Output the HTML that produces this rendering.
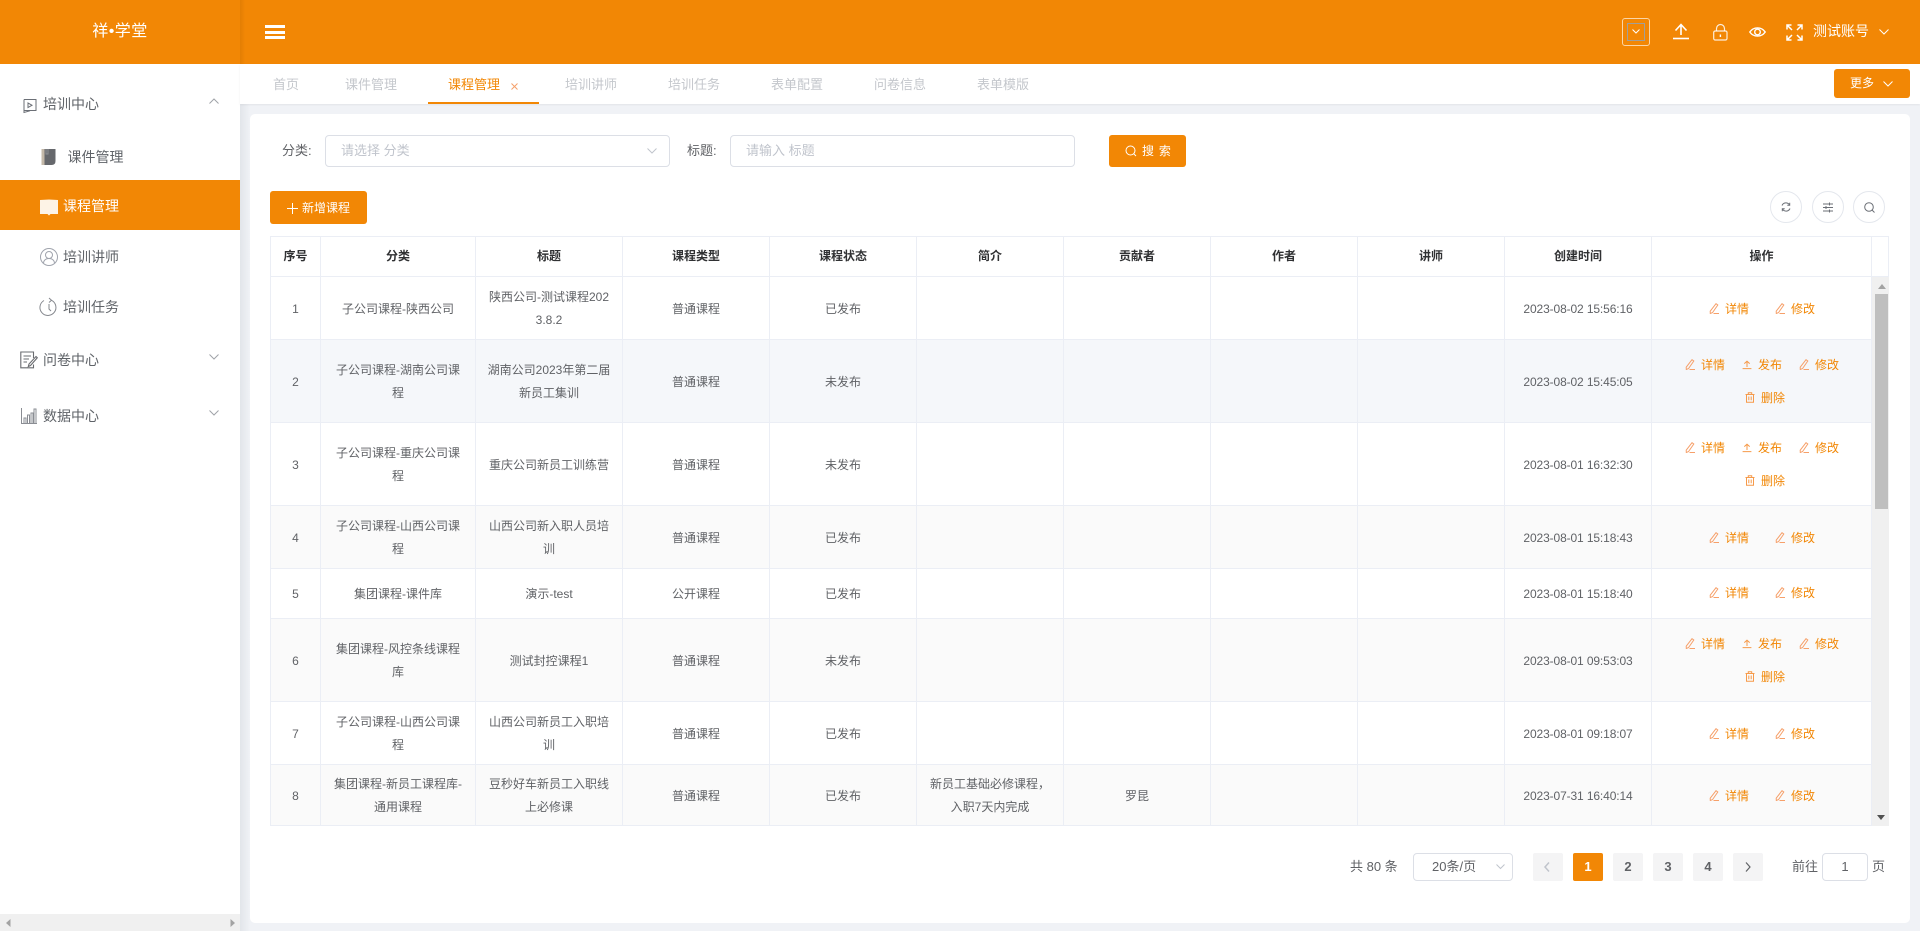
<!DOCTYPE html>
<html lang="zh-CN"><head><meta charset="utf-8"><title>课程管理</title>
<style>
*{box-sizing:border-box}
html,body{margin:0;padding:0;width:1920px;height:931px;overflow:hidden;background:#f0f2f6;font-family:"Liberation Sans","Noto Sans CJK SC",sans-serif;font-size:12px;color:#606266}
.a{position:absolute}
.t{position:absolute;white-space:nowrap;line-height:20px;height:20px}
svg{position:absolute;display:block;overflow:visible}
#hdr{left:0;top:0;width:1920px;height:64px;background:#f28705}
#side{left:0;top:64px;width:240px;height:867px;background:#fff}
#shadow{left:240px;top:64px;width:10px;height:867px;background:linear-gradient(90deg,#e2e5ea,#f0f2f6)}
#tabs{left:240px;top:64px;width:1680px;height:40px;background:#fff;box-shadow:0 1px 2px rgba(0,0,0,.06)}
#card{left:250px;top:114px;width:1660px;height:809px;background:#fff;border-radius:5px}
.tab{font-size:13px;color:#c4c7cc;top:75px}
.m{font-size:14px;color:#5f6368}
.btn{background:#f28705;border-radius:3px;color:#fff}
.box{background:#fff;border:1px solid #dcdfe6;border-radius:4px}
.r{position:absolute;left:270px;width:1619px;border-bottom:1px solid #ebeef5;border-left:1px solid #ebeef5;background:#fff}
.r.alt{background:#fafafa}.r.hov{background:#f5f7fa}
.c{position:absolute;top:0;bottom:0;display:flex;align-items:center;justify-content:center;text-align:center;line-height:23px;border-right:1px solid #ebeef5;color:#606266;padding-top:2px}
.th .c{padding-top:0}
.c0{left:0;width:50px}.c1{left:50px;width:155px}.c2{left:205px;width:147px}.c3{left:352px;width:147px}.c4{left:499px;width:147px}.c5{left:646px;width:147px}.c6{left:793px;width:147px}.c7{left:940px;width:147px}.c8{left:1087px;width:147px}.c9{left:1234px;width:147px}.c10{left:1381px;width:220px}
.r:not(.th) .c9{letter-spacing:-.12px}
.th .c{font-weight:bold;color:#303133}
.op{position:absolute;height:20px;line-height:20px;color:#f28705;white-space:nowrap;padding-left:16px}
.op svg{left:0;top:4px;width:10px;height:11px}
.pg{position:absolute;top:853px;width:30px;height:28px;background:#f4f4f5;border-radius:2px;text-align:center;line-height:28px;font-size:13px;font-weight:bold;color:#606266}
.rb{width:32px;height:32px;top:191px;border:1px solid #e4e7ed;border-radius:50%}
</style></head><body>
<svg width="0" height="0" style="position:absolute"><defs>
<symbol id="e" viewBox="0 0 10 11"><path d="M7 .7 8.800 2 3.500 9.600 1.300 10.500 1.200 8.200Z M4.500 10.500H10" fill="none" stroke="#f6a06a" stroke-width="1"/></symbol>
<symbol id="u" viewBox="0 0 10 11"><path d="M5 2.200V8M2.300 4.600 5 2.200 7.700 4.600M.6 9.600H9.400" fill="none" stroke="#f69a4a" stroke-width="1"/></symbol>
<symbol id="d" viewBox="0 0 10 11"><path d="M.5 2.500H9.500M3.300 2.500V.8H6.700V2.500M1.500 2.500V10.200H8.500V2.500M3.800 4.500V8.300M6.200 4.500V8.300" fill="none" stroke="#f69a4a" stroke-width="1"/></symbol>
</defs></svg>

<div class="a" id="hdr"></div>
<div class="a" style="left:240px;top:0;width:5px;height:64px;background:linear-gradient(90deg,#e27e04,#f28705)"></div>
<div class="t" style="left:91px;top:21px;font-size:16px;line-height:22px;height:22px;color:#fff;width:58px;text-align:center;letter-spacing:.5px">祥•学堂</div>
<div class="a" style="left:265px;top:25px;width:20px;height:3px;background:#fff"></div>
<div class="a" style="left:265px;top:31px;width:20px;height:3px;background:#fff"></div>
<div class="a" style="left:265px;top:36px;width:20px;height:3px;background:#fff"></div>

<div class="a" style="left:1622px;top:18px;width:28px;height:28px;border:1px solid rgba(255,255,255,.65);border-radius:3px"></div>
<div class="a" style="left:1627px;top:23px;width:18px;height:18px;border:1px solid rgba(140,165,190,.8)"></div>
<svg style="left:1632px;top:29px" width="8" height="5"><path d="M.5 .5 4 4 7.500 .5" fill="none" stroke="#fff"/></svg>
<svg style="left:1672px;top:23px" width="18" height="17"><path d="M9 2V12M3.500 7.500 9 1.500 14.500 7.500" fill="none" stroke="#fff" stroke-width="1.600"/><path d="M1 15.500H17" stroke="#fff" stroke-width="1.600"/></svg>
<svg style="left:1713px;top:24px" width="15" height="17"><rect x=".7" y="7" width="13.300" height="9" rx="1.500" fill="none" stroke="#fff" stroke-opacity=".85" stroke-width="1.200"/><path d="M3.500 7V4.500a4 4 0 0 1 8 0V7" fill="none" stroke="#fff" stroke-opacity=".85" stroke-width="1.200"/><path d="M7.400 10.500V13" stroke="#fff" stroke-width="1.400"/></svg>
<svg style="left:1749px;top:26px" width="17" height="12"><path d="M.8 6C4.500 .6 12.500 .6 16.200 6 12.500 11.400 4.500 11.400 .8 6Z" fill="none" stroke="#fff" stroke-width="1.400"/><circle cx="8.500" cy="6" r="2.800" fill="none" stroke="#fff" stroke-width="1.400"/></svg>
<svg style="left:1786px;top:24px" width="17" height="17" fill="none" stroke="#fff" stroke-width="1.500"><path d="M1 5.500V1H5.500M1 1 6 6M16 5.500V1H11.500M16 1 11 6M1 11.500V16H5.500M1 16 6 11M16 11.500V16H11.500M16 16 11 11"/></svg>
<div class="t" style="left:1813px;top:21px;font-size:14px;color:#fff">测试账号</div>
<svg style="left:1879px;top:29px" width="10" height="6"><path d="M.5 .5 5 5 9.500 .5" fill="none" stroke="#fff"/></svg>

<div class="a" id="side"></div>
<svg style="left:23px;top:97px" width="14" height="16" fill="none" stroke="#6b6f76" stroke-width="1"><path d="M1 2.500H13V13.500H1V15.500"/><path d="M1 2.500V15.500L7 13.800"/><path d="M5 6V10.500L9 8.200Z"/></svg>
<div class="t m" style="left:43px;top:94px">培训中心</div>
<svg style="left:209px;top:98px" width="10" height="6"><path d="M.5 5.500 5 1 9.500 5.500" fill="none" stroke="#a0a3a8"/></svg>
<svg style="left:41px;top:148px" width="16" height="18"><path d="M.5 1H14.500V13Q14.500 17 10.500 17H.5Z" fill="#66686c"/><rect x=".5" y="1" width="3" height="16" fill="#c4b9a9"/><path d="M5 1V6H7V1" fill="none" stroke="#8e9094"/></svg>
<div class="t m" style="left:67.500px;top:147px">课件管理</div>
<div class="a" style="left:0;top:180px;width:240px;height:50px;background:#f28705"></div>
<svg style="left:40px;top:199px" width="18" height="17"><path d="M0 1 9 .5 18 1V15H10.500L9 16.500 7.500 15H0Z" fill="#fdf3e6"/></svg>
<div class="t m" style="left:63px;top:196px;color:#fff">课程管理</div>
<svg style="left:40px;top:248px" width="18" height="18" fill="none" stroke="#a0a4ad" stroke-width="1"><circle cx="9" cy="9" r="8.500"/><circle cx="9" cy="7" r="3.500"/><path d="M3.500 15C4 11.500 6 10.500 9 10.500S14 11.500 14.500 15"/></svg>
<div class="t m" style="left:63px;top:247px">培训讲师</div>
<svg style="left:40px;top:297px" width="18" height="19" fill="none" stroke="#85888e" stroke-width="1"><path d="M11.500 3.300A8 8 0 1 1 4 3.500"/><path d="M9 1 11.500 3.300 9 5.500"/><path d="M9 7V12L11 14"/></svg>
<div class="t m" style="left:63px;top:297px">培训任务</div>
<svg style="left:20px;top:351px" width="18" height="18" fill="none" stroke="#6a6c70" stroke-width="1.100"><path d="M13.500 7V1H.8V16.800H13.500V13.500"/><path d="M3.500 5H11M3.500 8H9M3.500 11H7"/><path d="M16 5.500 17.300 6.800 10.500 14.500 8.300 15.500 9 13Z"/></svg>
<div class="t m" style="left:43px;top:350px">问卷中心</div>
<svg style="left:209px;top:354px" width="10" height="6"><path d="M.5 .5 5 5 9.500 .5" fill="none" stroke="#a0a3a8"/></svg>
<svg style="left:21px;top:408px" width="16" height="16" fill="none" stroke="#8a8d93" stroke-width="1"><path d="M.5 0V15.500H16"/><path d="M3 15V10H5V15M6.500 15V7H8.500V15M10 15V5H12V15M13 15V1H15V15"/></svg>
<div class="t m" style="left:43px;top:406px">数据中心</div>
<svg style="left:209px;top:410px" width="10" height="6"><path d="M.5 .5 5 5 9.500 .5" fill="none" stroke="#a0a3a8"/></svg>
<div class="a" style="left:0;top:914px;width:240px;height:17px;background:#f0f0f0"></div>
<svg style="left:6px;top:919px" width="5" height="8"><path d="M4.500 0V8L0 4Z" fill="#a3a3a3"/></svg>
<svg style="left:230px;top:919px" width="5" height="8"><path d="M.5 0V8L5 4Z" fill="#a3a3a3"/></svg>

<div class="a" id="shadow"></div>
<div class="a" id="tabs"></div>
<div class="t tab" style="left:273px">首页</div>
<div class="t tab" style="left:345px">课件管理</div>
<div class="t tab" style="left:448px;color:#f28705">课程管理</div>
<svg style="left:511px;top:83px" width="7" height="7"><path d="M.5 .5 6.500 6.500M6.500 .5 .5 6.500" stroke="#f5a06a"/></svg>
<div class="a" style="left:428px;top:102px;width:111px;height:2px;background:#f28705"></div>
<div class="t tab" style="left:565px">培训讲师</div>
<div class="t tab" style="left:668px">培训任务</div>
<div class="t tab" style="left:771px">表单配置</div>
<div class="t tab" style="left:874px">问卷信息</div>
<div class="t tab" style="left:977px">表单模版</div>
<div class="a btn" style="left:1834px;top:69px;width:76px;height:29px"></div>
<div class="t" style="left:1850px;top:73px;color:#fff">更多</div>
<svg style="left:1883px;top:81px" width="10" height="6"><path d="M.5 .5 5 5 9.500 .5" fill="none" stroke="#fff"/></svg>

<div class="a" id="card"></div>
<div class="t" style="left:282px;top:141px;font-size:13px">分类:</div>
<div class="a box" style="left:325px;top:135px;width:345px;height:32px"></div>
<div class="t" style="left:341px;top:141px;font-size:13px;color:#c0c4cc">请选择 分类</div>
<svg style="left:647px;top:148px" width="10" height="6"><path d="M.5 .5 5 5 9.500 .5" fill="none" stroke="#c0c4cc"/></svg>
<div class="t" style="left:687px;top:141px;font-size:13px">标题:</div>
<div class="a box" style="left:730px;top:135px;width:345px;height:32px"></div>
<div class="t" style="left:746px;top:141px;font-size:13px;color:#c0c4cc">请输入 标题</div>
<div class="a btn" style="left:1109px;top:135px;width:77px;height:32px"></div>
<svg style="left:1125px;top:145px" width="12" height="12" fill="none" stroke="#fff"><circle cx="5.500" cy="5.500" r="4.500"/><path d="M8.800 8.800 11 11"/></svg>
<div class="t" style="left:1142px;top:141px;color:#fff;word-spacing:1.500px">搜 索</div>

<div class="a btn" style="left:270px;top:191px;width:97px;height:33px"></div>
<svg style="left:287px;top:203px" width="11" height="11"><path d="M5.500 0V11M0 5.500H11" stroke="#fff"/></svg>
<div class="t" style="left:302px;top:198px;color:#fff">新增课程</div>

<div class="a rb" style="left:1770px"></div>
<svg style="left:1781px;top:202px" width="10" height="10" fill="none" stroke="#6b6f76"><path d="M1 3.500A4.200 4.200 0 0 1 8.500 3M9 6.500A4.200 4.200 0 0 1 1.500 7"/><path d="M8.700 .8V3.200H6.300M1.300 9.200V6.800H3.700"/></svg>
<div class="a rb" style="left:1812px"></div>
<svg style="left:1822px;top:202px" width="12" height="11" fill="none" stroke="#6b6f76"><path d="M1 2H11M1 5.500H11M1 9H11"/><path d="M7.500 .5V3.500M4 4V7M7.500 7.500V10.500"/></svg>
<div class="a rb" style="left:1853px"></div>
<svg style="left:1864px;top:202px" width="11" height="11" fill="none" stroke="#6b6f76"><circle cx="5" cy="5" r="4.300"/><path d="M8 8 10.500 10.500"/></svg>

<div class="r th" style="top:236px;height:41px;border-top:1px solid #ebeef5;border-right:1px solid #ebeef5">
<div class="c c0">序号</div><div class="c c1">分类</div><div class="c c2">标题</div><div class="c c3">课程类型</div><div class="c c4">课程状态</div><div class="c c5">简介</div><div class="c c6">贡献者</div><div class="c c7">作者</div><div class="c c8">讲师</div><div class="c c9">创建时间</div><div class="c c10">操作</div>
</div>

<div class="r" style="top:277px;height:63px">
<div class="c c0">1</div><div class="c c1">子公司课程-陕西公司</div><div class="c c2">陕西公司-测试课程202<br>3.8.2</div><div class="c c3">普通课程</div><div class="c c4">已发布</div><div class="c c5"></div><div class="c c6"></div><div class="c c7"></div><div class="c c8"></div><div class="c c9">2023-08-02 15:56:16</div><div class="c c10"></div>
<a class="op" style="left:1438px;top:22px"><svg><use href="#e"/></svg>详情</a><a class="op" style="left:1504px;top:22px"><svg><use href="#e"/></svg>修改</a>
</div>
<div class="r hov" style="top:340px;height:83px">
<div class="c c0">2</div><div class="c c1">子公司课程-湖南公司课<br>程</div><div class="c c2">湖南公司2023年第二届<br>新员工集训</div><div class="c c3">普通课程</div><div class="c c4">未发布</div><div class="c c5"></div><div class="c c6"></div><div class="c c7"></div><div class="c c8"></div><div class="c c9">2023-08-02 15:45:05</div><div class="c c10"></div>
<a class="op" style="left:1414px;top:15px"><svg><use href="#e"/></svg>详情</a><a class="op" style="left:1471px;top:15px"><svg><use href="#u"/></svg>发布</a><a class="op" style="left:1528px;top:15px"><svg><use href="#e"/></svg>修改</a><a class="op" style="left:1474px;top:48px"><svg><use href="#d"/></svg>删除</a>
</div>
<div class="r" style="top:423px;height:83px">
<div class="c c0">3</div><div class="c c1">子公司课程-重庆公司课<br>程</div><div class="c c2">重庆公司新员工训练营</div><div class="c c3">普通课程</div><div class="c c4">未发布</div><div class="c c5"></div><div class="c c6"></div><div class="c c7"></div><div class="c c8"></div><div class="c c9">2023-08-01 16:32:30</div><div class="c c10"></div>
<a class="op" style="left:1414px;top:15px"><svg><use href="#e"/></svg>详情</a><a class="op" style="left:1471px;top:15px"><svg><use href="#u"/></svg>发布</a><a class="op" style="left:1528px;top:15px"><svg><use href="#e"/></svg>修改</a><a class="op" style="left:1474px;top:48px"><svg><use href="#d"/></svg>删除</a>
</div>
<div class="r alt" style="top:506px;height:63px">
<div class="c c0">4</div><div class="c c1">子公司课程-山西公司课<br>程</div><div class="c c2">山西公司新入职人员培<br>训</div><div class="c c3">普通课程</div><div class="c c4">已发布</div><div class="c c5"></div><div class="c c6"></div><div class="c c7"></div><div class="c c8"></div><div class="c c9">2023-08-01 15:18:43</div><div class="c c10"></div>
<a class="op" style="left:1438px;top:22px"><svg><use href="#e"/></svg>详情</a><a class="op" style="left:1504px;top:22px"><svg><use href="#e"/></svg>修改</a>
</div>
<div class="r" style="top:569px;height:50px">
<div class="c c0">5</div><div class="c c1">集团课程-课件库</div><div class="c c2">演示-test</div><div class="c c3">公开课程</div><div class="c c4">已发布</div><div class="c c5"></div><div class="c c6"></div><div class="c c7"></div><div class="c c8"></div><div class="c c9">2023-08-01 15:18:40</div><div class="c c10"></div>
<a class="op" style="left:1438px;top:14px"><svg><use href="#e"/></svg>详情</a><a class="op" style="left:1504px;top:14px"><svg><use href="#e"/></svg>修改</a>
</div>
<div class="r alt" style="top:619px;height:83px">
<div class="c c0">6</div><div class="c c1">集团课程-风控条线课程<br>库</div><div class="c c2">测试封控课程1</div><div class="c c3">普通课程</div><div class="c c4">未发布</div><div class="c c5"></div><div class="c c6"></div><div class="c c7"></div><div class="c c8"></div><div class="c c9">2023-08-01 09:53:03</div><div class="c c10"></div>
<a class="op" style="left:1414px;top:15px"><svg><use href="#e"/></svg>详情</a><a class="op" style="left:1471px;top:15px"><svg><use href="#u"/></svg>发布</a><a class="op" style="left:1528px;top:15px"><svg><use href="#e"/></svg>修改</a><a class="op" style="left:1474px;top:48px"><svg><use href="#d"/></svg>删除</a>
</div>
<div class="r" style="top:702px;height:63px">
<div class="c c0">7</div><div class="c c1">子公司课程-山西公司课<br>程</div><div class="c c2">山西公司新员工入职培<br>训</div><div class="c c3">普通课程</div><div class="c c4">已发布</div><div class="c c5"></div><div class="c c6"></div><div class="c c7"></div><div class="c c8"></div><div class="c c9">2023-08-01 09:18:07</div><div class="c c10"></div>
<a class="op" style="left:1438px;top:22px"><svg><use href="#e"/></svg>详情</a><a class="op" style="left:1504px;top:22px"><svg><use href="#e"/></svg>修改</a>
</div>
<div class="r alt" style="top:765px;height:61px">
<div class="c c0">8</div><div class="c c1">集团课程-新员工课程库-<br>通用课程</div><div class="c c2">豆秒好车新员工入职线<br>上必修课</div><div class="c c3">普通课程</div><div class="c c4">已发布</div><div class="c c5">新员工基础必修课程，<br>入职7天内完成</div><div class="c c6">罗昆</div><div class="c c7"></div><div class="c c8"></div><div class="c c9">2023-07-31 16:40:14</div><div class="c c10"></div>
<a class="op" style="left:1438px;top:21px"><svg><use href="#e"/></svg>详情</a><a class="op" style="left:1504px;top:21px"><svg><use href="#e"/></svg>修改</a>
</div>

<div class="a" style="left:1872px;top:277px;width:17px;height:549px;background:#f0f0f0"></div>
<div class="a" style="left:1875px;top:294px;width:13px;height:215px;background:#bfbfbf"></div>
<svg style="left:1878px;top:284px" width="8" height="5"><path d="M4 0 8 5H0Z" fill="#a3a3a3"/></svg>
<svg style="left:1877px;top:815px" width="8" height="5"><path d="M0 0H8L4 5Z" fill="#505050"/></svg>

<div class="t" style="left:1350px;top:857px;font-size:13px">共 80 条</div>
<div class="a box" style="left:1413px;top:853px;width:100px;height:28px"></div>
<div class="t" style="left:1432px;top:857px;font-size:13px">20条/页</div>
<svg style="left:1496px;top:864px" width="9" height="6"><path d="M.5 .5 4.500 4.500 8.500 .5" fill="none" stroke="#c0c4cc"/></svg>
<div class="pg" style="left:1533px"></div>
<svg style="left:1544px;top:862px" width="6" height="10"><path d="M5 .5 1 5 5 9.500" fill="none" stroke="#c0c4cc" stroke-width="1.500"/></svg>
<div class="pg" style="left:1573px;background:#f28705;color:#fff">1</div>
<div class="pg" style="left:1613px">2</div>
<div class="pg" style="left:1653px">3</div>
<div class="pg" style="left:1693px">4</div>
<div class="pg" style="left:1733px"></div>
<svg style="left:1745px;top:862px" width="6" height="10"><path d="M1 .5 5 5 1 9.500" fill="none" stroke="#606266" stroke-width="1.200"/></svg>
<div class="t" style="left:1792px;top:857px;font-size:13px">前往</div>
<div class="a box" style="left:1822px;top:853px;width:46px;height:28px;text-align:center;line-height:26px;font-size:13px">1</div>
<div class="t" style="left:1872px;top:857px;font-size:13px">页</div>
</body></html>
